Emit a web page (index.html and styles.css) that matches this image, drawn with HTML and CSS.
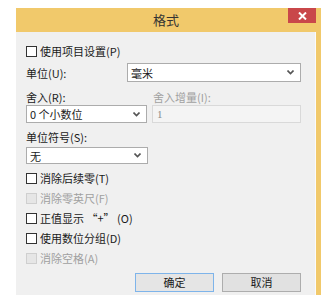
FILE: index.html
```html
<!DOCTYPE html>
<html lang="zh-CN">
<head>
  <meta charset="UTF-8" />
  <title>格式</title>
  <link rel="stylesheet" href="styles.css">
</head>
<body>

<div class="window">
  <div class="titlebar">
    <div class="title">格式</div>
    <div class="close">
      <svg width="9" height="8" viewBox="0 0 9 8"><path d="M1 0.5 L8 7.5 M8 0.5 L1 7.5" stroke="#fff" stroke-width="2"/></svg>
    </div>
  </div>

  <div class="content">
    <div class="check-row first">
      <span class="box"></span><span>使用项目设置(P)</span>
    </div>

    <div class="unit-row">
      <span class="unit-label">单位(U):</span>
      <div class="select wide"><span>毫米</span><svg class="chev" width="7" height="5" viewBox="0 0 7 5"><path d="M0.5 0.5 L3.5 3.5 L6.5 0.5" stroke="#555" stroke-width="1.6" fill="none"/></svg></div>
    </div>

    <div class="two-col labels">
      <span class="col-left">舍入(R):</span>
      <span class="col-right muted">舍入增量(I):</span>
    </div>
    <div class="two-col inputs">
      <div class="select narrow"><span>0 个小数位</span><svg class="chev" width="7" height="5" viewBox="0 0 7 5"><path d="M0.5 0.5 L3.5 3.5 L6.5 0.5" stroke="#555" stroke-width="1.6" fill="none"/></svg></div>
      <div class="field disabled">1</div>
    </div>

    <div class="label-row">单位符号(S):</div>
    <div class="select narrow small"><span>无</span><svg class="chev" width="7" height="5" viewBox="0 0 7 5"><path d="M0.5 0.5 L3.5 3.5 L6.5 0.5" stroke="#555" stroke-width="1.6" fill="none"/></svg></div>

    <div class="checks">
      <div class="check-row"><span class="box"></span><span>消除后续零(T)</span></div>
      <div class="check-row off"><span class="box"></span><span>消除零英尺(F)</span></div>
      <div class="check-row"><span class="box"></span><span>正值显示 “+” (O)</span></div>
      <div class="check-row"><span class="box"></span><span>使用数位分组(D)</span></div>
      <div class="check-row off"><span class="box"></span><span>消除空格(A)</span></div>
    </div>

    <div class="buttons">
      <button type="button" class="default">确定</button>
      <button type="button">取消</button>
    </div>
  </div>
</div>

</body>
</html>
```

FILE: styles.css
```css
:root {
  --frame: #f1c96b;
  --close: #c9474a;
  --panel: #f0f0f0;
  --muted: #a0a0a0;
}

* {
  box-sizing: border-box;
}

body {
  margin: 0;
  background: #fff;
  font-family: "Noto Sans CJK SC", "Noto Sans", sans-serif;
  font-size: 11px;
  color: #1a1a1a;
}

.window {
  width: 305px;
  margin: 8px 0 0 16px;
  background: var(--frame);
  padding-right: 5px;
}

.titlebar {
  height: 24px;
  display: flex;
  align-items: flex-start;
}

.title {
  flex: 1;
  text-align: center;
  padding-left: 28px;
  line-height: 24px;
  font-size: 13px;
  color: #333;
}

.close {
  width: 28px;
  height: 15px;
  background: var(--close);
  display: flex;
  align-items: center;
  justify-content: center;
}

.content {
  height: 263px;
  overflow: hidden;
  background: var(--panel);
  border-right: 1px solid #fbfbfb;
  padding: 9px 14px 0 10px;
}

.check-row {
  height: 20px;
  display: flex;
  align-items: center;
  gap: 3px;
}

.box {
  width: 11px;
  height: 11px;
  background: #fff;
  border: 1px solid #333;
}

.check-row.off {
  color: var(--muted);
}

.check-row.off .box {
  background: #e6e6e6;
  border-color: #cfcfcf;
}

.unit-row {
  margin-top: 2px;
  display: flex;
  align-items: center;
}

.unit-label {
  width: 103px;
}

.select {
  height: 18px;
  line-height: 16px;
  background: #fff;
  border: 1px solid #acacac;
  display: flex;
  align-items: center;
  justify-content: space-between;
  padding: 0 6px 0 3px;
}

.select.wide {
  width: 177px;
  height: 19px;
}

.select.narrow {
  width: 122px;
}

.select.small {
  height: 17px;
  margin-top: 3px;
}

.two-col {
  display: flex;
  align-items: center;
}

.labels {
  margin-top: 8px;
  height: 14px;
  line-height: 14px;
}

.inputs {
  margin-top: 1px;
}

.col-left {
  width: 127px;
}

.muted {
  color: var(--muted);
}

.field {
  width: 150px;
  height: 18px;
  margin-left: 5px;
  padding: 0 4px;
  line-height: 16px;
  border: 1px solid #d9d9d9;
}

.field.disabled {
  background: #f4f4f4;
  color: #8a8a8a;
  font-family: "Liberation Serif", serif;
}

.label-row {
  margin-top: 7px;
  height: 14px;
  line-height: 14px;
}

.checks {
  margin-top: 4px;
}

.buttons {
  margin-top: 5px;
  display: flex;
  justify-content: flex-end;
  gap: 8px;
}

.buttons button {
  width: 79px;
  height: 19px;
  padding: 0;
  font-family: inherit;
  font-size: 11px;
  line-height: 17px;
  color: #1a1a1a;
  background: #e1e1e1;
  border: 1px solid #adadad;
}

.buttons button.default {
  border-color: #7eb4ea;
  background: #e5e5e5;
}
```
